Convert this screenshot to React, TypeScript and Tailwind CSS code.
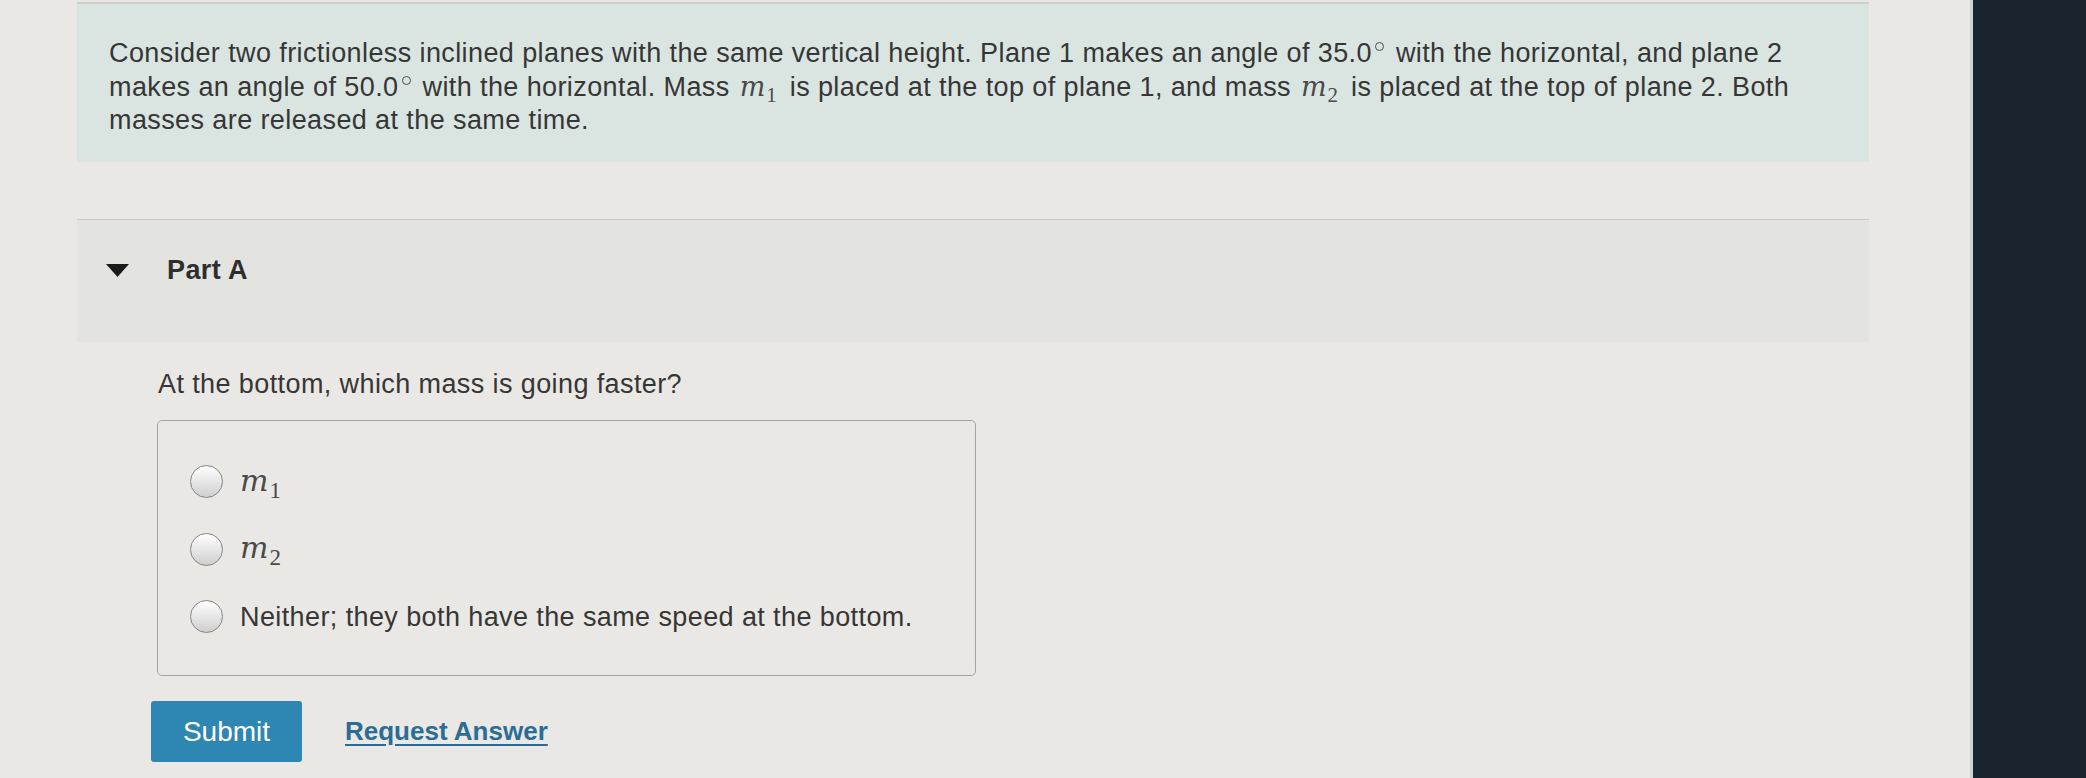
import React from "react";

const body = "font-['Liberation_Sans',Arial,sans-serif]";

function MathVar({ sub, big }: { sub: string; big?: boolean }) {
  return (
    <span className="ml-[10px] mr-[13px] whitespace-nowrap leading-[0] tracking-normal text-[#4a4a4a]">
      <span className={big ? "font-['DejaVu_Serif',serif] italic text-[30px]" : "font-['DejaVu_Serif',serif] italic text-[27px]"}>m</span>
      <span className={big ? "relative top-[7px] ml-[1px] font-['Liberation_Serif',serif] text-[23px]" : "relative top-[6px] ml-[1px] font-['Liberation_Serif',serif] text-[21px]"}>
        {sub}
      </span>
    </span>
  );
}

function Deg() {
  return (
    <span className="relative -top-[11px] ml-[3px] mr-[12px] inline-block h-[9px] w-[9px] rounded-full border-[1.5px] border-[#4a4a4a]" />
  );
}

function Radio({ children }: { children: React.ReactNode }) {
  return (
    <label className="flex h-[67.5px] items-center gap-[17px]">
      <span className="h-[33px] w-[33px] rounded-full border-[1.5px] border-[#858585] bg-linear-to-b from-white to-[#cfcfcf]" />
      <span>{children}</span>
    </label>
  );
}

export default function App() {
  return (
    <div className={`flex h-[778px] w-[2086px] overflow-hidden ${body} text-[27px] tracking-[0.4px] text-[#363636]`}>
      {/* page */}
      <div className="w-[1970px] shrink-0 bg-[#e9e8e5] pt-[2px]">
        <div className="ml-[77px] w-[1792px]">
          <div className="border-t-2 border-[#cdcecb]" />
          {/* problem intro */}
          <div className="h-[158px] bg-[#dae5e1] pl-[32px] pt-[33px] leading-[33.5px]">
            <div className="whitespace-nowrap">
              Consider two frictionless inclined planes with the same vertical height. Plane 1 makes an angle of 35.0<Deg />with the horizontal, and plane 2
            </div>
            <div className="whitespace-nowrap">
              makes an angle of 50.0<Deg />with the horizontal. Mass<MathVar sub="1" />is placed at the top of plane 1, and mass<MathVar sub="2" />is placed at the top of plane 2. Both
            </div>
            <div className="whitespace-nowrap">masses are released at the same time.</div>
          </div>

          {/* Part A header */}
          <div className="mt-[57px] h-[123px] border-t border-[#c9c9c6] bg-[#e3e3e0] pt-[34px]">
            <div className="flex items-center leading-[32px]">
              <svg className="ml-[29px] mr-[38px]" width="23" height="13" viewBox="0 0 23 13">
                <path d="M0 0 L23 0 L11.5 13 Z" fill="#1a1a1a" />
              </svg>
              <span className="font-bold text-[#2e2e2e]">Part A</span>
            </div>
          </div>

          {/* question */}
          <div className="mt-[26px] pl-[81px] leading-[32px]">At the bottom, which mass is going faster?</div>

          <div className="ml-[80px] mt-[20px] h-[256px] w-[819px] rounded-[5px] border border-[#a3a3a0] pl-[32px] pt-[27px]">
            <Radio>
              <span className="-ml-[10px] block">
                <MathVar sub="1" big />
              </span>
            </Radio>
            <Radio>
              <span className="-ml-[10px] block">
                <MathVar sub="2" big />
              </span>
            </Radio>
            <Radio>Neither; they both have the same speed at the bottom.</Radio>
          </div>

          <div className="ml-[74px] mt-[25px] flex items-center gap-[43px]">
            <button className="h-[61px] w-[151px] rounded-[3px] bg-[#2e86b3] text-[28px] tracking-normal text-white">Submit</button>
            <a className="text-[26px] font-bold tracking-normal text-[#2b6d94] underline underline-offset-[4px]">Request Answer</a>
          </div>
        </div>
      </div>
      {/* screen bezel */}
      <div className="w-[3px] shrink-0 bg-[#c8d3dc]" />
      <div className="flex-1 bg-[#1a242e]" />
    </div>
  );
}
